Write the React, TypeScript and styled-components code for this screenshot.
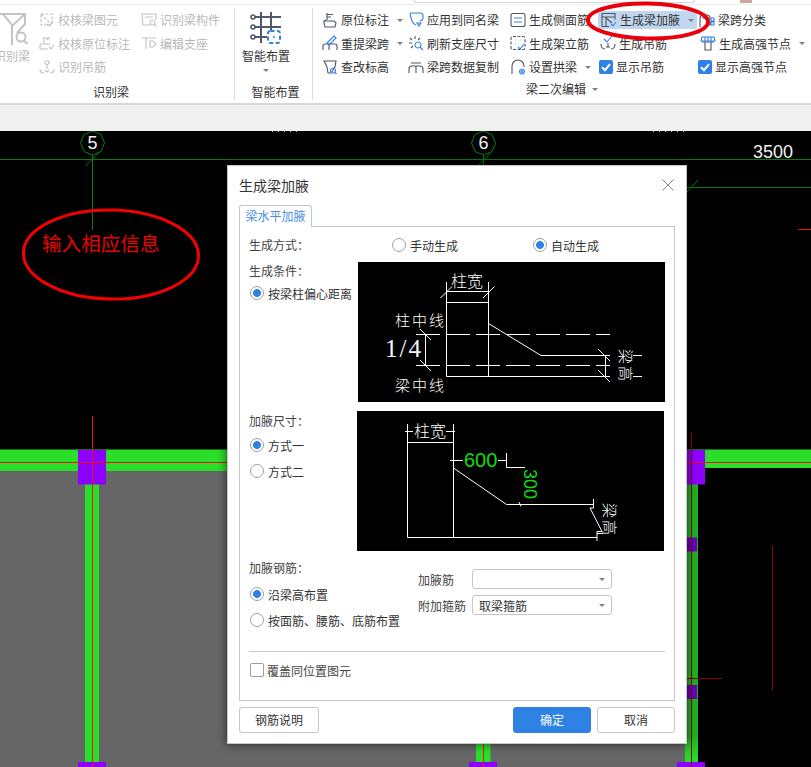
import React from "react";
import styled, { createGlobalStyle } from "styled-components";

const GlobalStyle = createGlobalStyle`
  html, body {
    margin: 0;
    padding: 0;
    background: #000;
  }
  body {
    font-family: "Noto Sans CJK SC", "Liberation Sans", sans-serif;
    font-size: 12px;
    color: #333;
  }
`;

type IconDef = { line?: string; dash?: string; accent?: string; fill?: string };

// small 16x16 ribbon icons, `accent` is the blue part
const icons: Record<string, IconDef> = {
  checkBeam: { dash: "M2 2h11v11H2z M2 2l9 9", accent: "M8 12l2 2 4-5" },
  checkMark: { line: "M5 2v6M5 3h5l-2 2M1 14v-3q0-2 2-2h8M1 14h8", accent: "M10 12l2 2 3-4" },
  findHanger: { line: "M1 10q0 4 4 4M15 10q0 4-4 4M8 5v5", accent: "M8 1.5a2 2 0 1 1-.01 0M6 11l2 2 2-2" },
  findPart: { line: "M1 2h14M1 2l1 11h7M15 2v6M4 5h8", accent: "M11.5 8a2.5 2.5 0 1 1-.01 0M13.5 12.5l2 2" },
  editSeat: { line: "M1 3h14M5 3v11M9 6h3l3 3-3 3H9z" },
  origin: { line: "M5 1v7M5 2.5h6M5 5h4M2 9h10l2 2-1 4H3l-1-4z M2 9l2-1" },
  relift: { line: "M1 15v-4q0-2 2-2h10q2 0 2 2v4M7 9v6", accent: "M5 8l7-7 2 2-7 7z" },
  elevation: { line: "M2 2h12l-1 6-4 6H6L5 8z", accent: "M11 9a2.5 2.5 0 1 1-.01 0M12.5 13l2 2" },
  samename: { accent: "M2 2q0-1 1-1h9q3 0 3 3v2q0 2-3 3M2 2l2 7q1 3 4 4M9 11h4l-2 3z" },
  refresh: { line: "M7 1v3M2 3l2 2M1 8h3M3 13l2-2M12 3l-2 2", accent: "M10 7a3 3 0 1 1-.01 0M12 12l3 3" },
  copySpan: { line: "M1 14v-4q0-3 3-3h8q3 0 3 3v4M8 7v7M3 4h10" },
  sideBar: { line: "M3 1.5h10q2 0 2 2v9q0 2-2 2H3q-2 0-2-2v-9q0-2 2-2z", accent: "M4 6h8M4 10h8" },
  frameBar: { dash: "M3 1.5h10q2 0 2 2v9q0 2-2 2H3q-2 0-2-2v-9q0-2 2-2z", accent: "M5 5h.5M10 5h.5M5 9h.5M8 12l2 2 4-5" },
  arch: { line: "M2 15V7a6 6 0 0 1 12 0v1", accent: "M12 10a2.5 2.5 0 1 1-.01 0M12 11.5a1 1 0 1 1-.01 0" },
  haunch: { line: "M1 1.5h13v6M1 1.5v13h7M1 5h13M5 5v9M5 6l6 5", accent: "M10 12l2 2 3-4" },
  hanger: { line: "M1 9q0 5 4 5M15 9q0 5-4 5M8 8v4M6 12h4", accent: "M4 4l3 3 5-6" },
  spanType: { line: "M1 15V6q0-3 3-3h4q3 0 3 3v2M3 6h7", accent: "M12 6h3v3h-3zM12 10h3v3h-3zM8 10h3v3H8z" },
  strong: { line: "M5 7v8h6V7M2 7h12", accent: "M2 2h12l1 4H1zM5 2v4M8 2v4M11 2v4" },
};

const Icon = ({ name, off }: { name: string; off?: boolean }) => {
  const def = icons[name];
  const dark = off ? "#c2c2c2" : "#4e5564";
  const blue = off ? "#c2c2c2" : "#2f80e7";
  return (
    <IconSvg viewBox="0 0 16 16">
      {def.line && <path d={def.line} stroke={dark} />}
      {def.dash && <path d={def.dash} stroke={dark} strokeDasharray="3 1.5" />}
      {def.accent && <path d={def.accent} stroke={blue} />}
    </IconSvg>
  );
};

const CheckBox = () => (
  <TickBox>
    <svg width="14" height="14" viewBox="0 0 14 14">
      <path d="M3 7.2l3 3 5-6" fill="none" stroke="#fff" strokeWidth="2" />
    </svg>
  </TickBox>
);

const App = () => {
  return (
    <Page>
      <GlobalStyle />
      <TopStrip>
        <SearchStub />
        <Avatar />
      </TopStrip>

      <Ribbon>
        <Group $w={235} $labelShift={12}>
          <GroupBody>
            <BigButton $off $w={36} $ml={-6} $mr={9}>
              <BigIconWrap $pl={6}>
                <svg width="28" height="33" viewBox="0 0 28 33" fill="none" stroke="#c4c4c4" strokeWidth="2">
                  <path d="M-2 2H25V12L17 21" />
                  <path d="M3 2L12 13V33M12 14L25 2" />
                  <circle cx="21" cy="25" r="4.5" />
                  <path d="M24.5 29l3 3" />
                </svg>
              </BigIconWrap>
              <span>识别梁</span>
            </BigButton>
            <Column $w={102}>
              <Item $off><Icon name="checkBeam" off />校核梁图元</Item>
              <Item $off><Icon name="checkMark" off />校核原位标注</Item>
              <Item $off><Icon name="findHanger" off />识别吊筋</Item>
            </Column>
            <Column $w={90}>
              <Item $off><Icon name="findPart" off />识别梁构件</Item>
              <Item $off><Icon name="editSeat" off />编辑支座</Item>
            </Column>
          </GroupBody>
          <GroupLabel>识别梁</GroupLabel>
        </Group>

        <Group $w={78} $labelShift={-4}>
          <GroupBody $pl={7}>
            <BigButton $w={48}>
              <BigIconWrap>
                <svg width="32" height="33" viewBox="0 0 32 33" fill="none">
                  <path d="M11 0V31M21 0V18M4 5H31M4 15H31M4 25H17" stroke="#50586a" strokeWidth="2" />
                  <circle cx="3" cy="5" r="2" stroke="#50586a" strokeWidth="1.6" />
                  <circle cx="3" cy="15" r="2" stroke="#50586a" strokeWidth="1.6" />
                  <circle cx="3" cy="25" r="2" stroke="#50586a" strokeWidth="1.6" />
                  <rect x="18" y="19" width="12" height="12" rx="2.5" stroke="#2f80e7" strokeWidth="2" strokeDasharray="4 2.5" />
                  <circle cx="24" cy="25" r="1" fill="#2f80e7" />
                </svg>
              </BigIconWrap>
              <span>智能布置</span>
              <Caret $ml={0} />
            </BigButton>
          </GroupBody>
          <GroupLabel>智能布置</GroupLabel>
        </Group>

        <Group $w={498} $last $labelUp>
          <GroupBody $pl={9}>
            <Column $w={86}>
              <Item><Icon name="origin" />原位标注<Caret /></Item>
              <Item><Icon name="relift" />重提梁跨<Caret /></Item>
              <Item><Icon name="elevation" />查改标高</Item>
            </Column>
            <Column $w={102}>
              <Item><Icon name="samename" />应用到同名梁</Item>
              <Item><Icon name="refresh" />刷新支座尺寸</Item>
              <Item><Icon name="copySpan" />梁跨数据复制</Item>
            </Column>
            <Column $w={88}>
              <Item><Icon name="sideBar" />生成侧面筋</Item>
              <Item><Icon name="frameBar" />生成架立筋</Item>
              <Item><Icon name="arch" />设置拱梁<Caret /></Item>
            </Column>
            <Column $w={99}>
              <Item $pl={3} $active><Icon name="haunch" />生成梁加腋<Caret /></Item>
              <Item $pl={2}><Icon name="hanger" />生成吊筋</Item>
              <Item $pl={1}><CheckBox />显示吊筋</Item>
            </Column>
            <Column $w={110}>
              <Item $pl={2}><Icon name="spanType" />梁跨分类</Item>
              <Item $pl={3}><Icon name="strong" />生成高强节点<Caret /></Item>
              <Item $pl={1}><CheckBox />显示高强节点</Item>
            </Column>
          </GroupBody>
          <GroupLabel>梁二次编辑<Caret $ml={6} /></GroupLabel>
        </Group>
      </Ribbon>

      <Gutter />

      <Canvas>
        <CadDrawing />
        <Dialog>
          <DialogHead>
            <DialogTitle>生成梁加腋</DialogTitle>
            <CloseMark viewBox="0 0 12 12">
              <path d="M.5.5l11 11M11.5.5l-11 11" stroke="#8a8a8a" fill="none" />
            </CloseMark>
          </DialogHead>
          <Tab>梁水平加腋</Tab>
          <Panel>
            <ModeRow>
              <FieldLabel $w={143}>生成方式：</FieldLabel>
              <RadioItem $w={141}><Radio />手动生成</RadioItem>
              <RadioItem><Radio $on />自动生成</RadioItem>
            </ModeRow>

            <SplitBlock>
              <LeftStack $mt={-1}>
                <FieldLabel>生成条件：</FieldLabel>
                <RadioItem $h={24}><Radio $on />按梁柱偏心距离</RadioItem>
              </LeftStack>
              <HaunchByOffset />
            </SplitBlock>

            <SplitBlock $mt={9} $ml={-1}>
              <LeftStack>
                <FieldLabel>加腋尺寸：</FieldLabel>
                <RadioItem $h={26} $mt={1}><Radio $on />方式一</RadioItem>
                <RadioItem $h={26}><Radio />方式二</RadioItem>
              </LeftStack>
              <HaunchBySize />
            </SplitBlock>

            <RebarBlock>
              <LeftStack>
                <FieldLabel>加腋钢筋：</FieldLabel>
                <RadioItem $h={26} $mt={3}><Radio $on />沿梁高布置</RadioItem>
                <RadioItem $h={26}><Radio />按面筋、腰筋、底筋布置</RadioItem>
              </LeftStack>
              <SelectStack>
                <SelectRow>
                  <SelectLabel>加腋筋</SelectLabel>
                  <FakeSelect><Caret $small /></FakeSelect>
                </SelectRow>
                <SelectRow>
                  <SelectLabel>附加箍筋</SelectLabel>
                  <FakeSelect>取梁箍筋<Caret $small /></FakeSelect>
                </SelectRow>
              </SelectStack>
            </RebarBlock>

            <Divider />
            <CoverRow>
              <EmptyBox />
              覆盖同位置图元
            </CoverRow>
          </Panel>
          <DialogFoot>
            <FootButton $w={80}>钢筋说明</FootButton>
            <FootRight>
              <FootButton $w={78} $primary>确定</FootButton>
              <FootButton $w={78}>取消</FootButton>
            </FootRight>
          </DialogFoot>
        </Dialog>
      </Canvas>

      <RibbonCircle viewBox="0 0 132 44">
        <ellipse cx="66" cy="21" rx="60" ry="17.5" fill="none" stroke="#e8000c" strokeWidth="4" transform="rotate(1 66 21)" />
      </RibbonCircle>
    </Page>
  );
};

// the drawing behind the dialog, coordinates are page pixels
const CadDrawing = () => (
  <CadSvg viewBox="0 131 811 636">
    <defs>
      <linearGradient id="colFade" x1="0" y1="0" x2="0" y2="1">
        <stop offset="0" stopColor="#22b022" />
        <stop offset="0.9" stopColor="#22b022" />
        <stop offset="1" stopColor="#2ade2a" />
      </linearGradient>
    </defs>
    <rect x="0" y="471" width="686" height="296" fill="#666" />
    <rect x="0" y="449.5" width="811" height="21.5" fill="#2ade2a" />
    <rect x="698" y="468" width="113" height="3" fill="#000" />

    <rect x="85" y="484" width="14" height="278" fill="#2ade2a" />
    <rect x="476" y="484" width="14.500" height="278" fill="#2ade2a" />
    <rect x="685" y="484" width="13" height="278" fill="url(#colFade)" />

    <rect x="78" y="450" width="28" height="34.500" fill="#8c00ff" />
    <rect x="78" y="762" width="28" height="5" fill="#8c00ff" />
    <rect x="469" y="762" width="28" height="5" fill="#8c00ff" />
    <rect x="677" y="762" width="28" height="5" fill="#8c00ff" />
    <rect x="680" y="450" width="25" height="34.500" fill="#8c00ff" />
    <rect x="685" y="537.500" width="12" height="14" fill="#6a00c0" />
    <rect x="685" y="685" width="12" height="14" fill="#6a00c0" />

    <g fill="none" strokeWidth="1">
      <path d="M0 462.500H811" stroke="#f01010" />
      <path d="M92.500 416V767M483.500 740V767" stroke="#f01010" />
      <path d="M691.500 433V767M687 678.500H722M772.500 546V690" stroke="#8b0000" />
      <path d="M798 229.500H811" stroke="#f01010" />

      <path d="M0 159.500H811M92.500 155V230M483.500 155V170M687 187.500H811" stroke="#0a7d0a" />
      <path d="M85.500 166L98.500 153M477.500 166L490.500 153M687 192L698 180" stroke="#0a7d0a" />
      <path d="M92.500 131L101 134.500L104.500 143L101 151.500L92.500 155L84 151.500L80.500 143L84 134.500Z" stroke="#0a7d0a" />
      <path d="M483.500 131L492 134.500L495.500 143L492 151.500L483.500 155L475 151.500L471.500 143L475 134.500Z" stroke="#0a7d0a" />
      <path d="M272 131.500H300M653 131.500H685" stroke="#bbb" strokeDasharray="1 5" />

      <ellipse cx="111" cy="254.500" rx="87.500" ry="44.500" stroke="#f40000" strokeWidth="3" transform="rotate(1 111 254.500)" />
    </g>

    <CadText x="92.500" y="149" fontSize="18" textAnchor="middle">5</CadText>
    <CadText x="483.500" y="149" fontSize="18" textAnchor="middle">6</CadText>
    <CadText x="753" y="158" fontSize="18">3500</CadText>
    <NoteText x="42" y="251">输入相应信息</NoteText>
  </CadSvg>
);

const HaunchByOffset = () => (
  <DiagramSvg viewBox="358 262 307 140">
    <g fill="none" stroke="#fff" strokeWidth="1">
      <path d="M446.500 282V376.500M488.500 282V376.500M446.500 291.500H488.500M446.500 302.500H488.500" />
      <path d="M440.500 298L452 286.500M483 298L494.500 286.500" />
      <path d="M488.500 323.500L541 355.500H610M446.500 376.500H610M605.500 355.500V376.500" />
      <path d="M598 349L610 361M598 370L610 382" />
      <path d="M416 334.500H610M416 365.500H610" strokeDasharray="24 6" />
      <path d="M425.500 334.500V365.500M420 329L431 340M420 360L431 371" />
      <path d="M633 355.500H642M633 376.500H642" />
    </g>
    <CadCjk x="451" y="287" fontSize="16">柱宽</CadCjk>
    <CadCjk x="395" y="326" fontSize="15" letterSpacing="2">柱中线</CadCjk>
    <CadCjk x="395" y="391" fontSize="15" letterSpacing="2">梁中线</CadCjk>
    <SerifText x="385" y="357" fontSize="25" letterSpacing="2">1/4</SerifText>
    <CadCjk fontSize="15" letterSpacing="2" transform="translate(619 349) rotate(90)" y="-1">梁高</CadCjk>
  </DiagramSvg>
);

const HaunchBySize = () => (
  <DiagramSvg viewBox="357 411 307 140">
    <g fill="none" stroke="#fff" strokeWidth="1">
      <path d="M407.500 424V537.500M453.500 424V537.500M407.500 442.500H453.500M407.500 537.500H597" />
      <path d="M405 431.500H413M446 431.500H455M450 460.500H463M498 460.500H507M506.500 453V467.500H525" />
      <path d="M453.500 468L506.500 504.500H593.500V499M593.500 504.500V508H590L602 531.500H597V541M597 533.500H603" />
      <path d="M519 502L521 506.500" />
    </g>
    <CadCjk x="414" y="437" fontSize="16">柱宽</CadCjk>
    <GreenText x="464" y="467" fontSize="20">600</GreenText>
    <GreenText fontSize="18" transform="translate(524 469) rotate(90)">300</GreenText>
    <CadCjk fontSize="15" letterSpacing="2" transform="translate(604 503) rotate(90)">梁高</CadCjk>
  </DiagramSvg>
);

const Page = styled.div`
  position: relative;
  width: 811px;
  height: 767px;
  overflow: hidden;
  display: flex;
  flex-direction: column;
  background: #fff;
`;

const TopStrip = styled.div`
  height: 5px;
  display: flex;
  background: #fff;
  border-bottom: 1px solid #eeeeee;
  box-sizing: border-box;
`;

const SearchStub = styled.div`
  width: 282px;
  height: 3px;
  margin-left: 413px;
  border: 1px solid #d5d5d5;
  border-top: 0;
  border-radius: 0 0 4px 4px;
  box-sizing: border-box;
`;

const Avatar = styled.div`
  width: 12px;
  height: 3px;
  margin-left: 45px;
  background: #c9a79a;
`;

const Ribbon = styled.div`
  height: 100px;
  box-sizing: border-box;
  display: flex;
  align-items: flex-start;
  padding-top: 3px;
  background: #fff;
  border-bottom: 2px solid #d9d9d9;
`;

const Group = styled.section<{ $w: number; $last?: boolean; $labelShift?: number; $labelUp?: boolean }>`
  width: ${(p) => p.$w}px;
  height: 92px;
  flex: none;
  box-sizing: border-box;
  border-right: ${(p) => (p.$last ? "0" : "1px solid #dcdcdc")};
  display: flex;
  flex-direction: column;

  & > div:last-child {
    transform: translate(${(p) => -(p.$labelShift ?? 0) / 2}px, ${(p) => (p.$labelUp ? -3 : 0)}px);
  }
`;

const GroupBody = styled.div<{ $pl?: number }>`
  height: 76px;
  display: flex;
  padding-left: ${(p) => p.$pl ?? 0}px;
`;

const GroupLabel = styled.div`
  height: 16px;
  line-height: 16px;
  display: flex;
  align-items: center;
  justify-content: center;
  color: #333;
`;

const Column = styled.div<{ $w: number }>`
  width: ${(p) => p.$w}px;
  flex: none;
  display: grid;
  grid-auto-rows: 23.5px;
  align-items: center;
  align-content: start;
`;

const Item = styled.div<{ $off?: boolean; $pl?: number; $active?: boolean }>`
  height: 18px;
  display: flex;
  align-items: center;
  gap: 3px;
  white-space: nowrap;
  padding-left: ${(p) => p.$pl ?? 0}px;
  color: ${(p) => (p.$off ? "#b9b9b9" : "#333")};
  background: ${(p) => (p.$active ? "#c0d7ef" : "transparent")};
  border-radius: 2px;
`;

const IconSvg = styled.svg`
  width: 16px;
  height: 16px;
  flex: none;
  fill: none;
  stroke-width: 1.1;
`;

const TickBox = styled.span`
  width: 14px;
  height: 14px;
  flex: none;
  display: block;
  background: #2f80e7;
  border-radius: 2px;
`;

const BigButton = styled.div<{ $off?: boolean; $w: number; $ml?: number; $mr?: number }>`
  width: ${(p) => p.$w}px;
  margin-left: ${(p) => p.$ml ?? 0}px;
  margin-right: ${(p) => p.$mr ?? 0}px;
  flex: none;
  display: flex;
  flex-direction: column;
  align-items: center;
  padding-top: 4px;
  line-height: 16px;
  white-space: nowrap;
  color: ${(p) => (p.$off ? "#b9b9b9" : "#333")};

  & > span:last-child {
    flex: none;
  }
`;

const BigIconWrap = styled.div<{ $pl?: number }>`
  height: 33px;
  margin-bottom: 3px;
  align-self: flex-start;
  padding-left: ${(p) => p.$pl ?? 8}px;
  line-height: 0;
`;

const Caret = styled.span<{ $ml?: number; $small?: boolean }>`
  display: block;
  flex: none;
  width: 0;
  height: 0;
  margin-left: ${(p) => (p.$small ? "auto" : `${p.$ml ?? 5}px`)};
  margin-top: ${(p) => (p.$ml === 0 ? "5px" : "1px")};
  border-left: 3px solid transparent;
  border-right: 3px solid transparent;
  border-top: 3px solid #808080;
`;

const Gutter = styled.div`
  height: 26px;
  background: #f0f0f0;
`;

const Canvas = styled.div`
  position: relative;
  flex: 1;
  background: #000;
`;

const CadSvg = styled.svg`
  display: block;
  width: 811px;
  height: 636px;
`;

const CadText = styled.text`
  fill: #f2f2f2;
  font-family: "Liberation Sans", sans-serif;
`;

const NoteText = styled.text`
  fill: #ee0000;
  font-family: "Noto Sans CJK SC", sans-serif;
  font-size: 19.6px;
`;

const RibbonCircle = styled.svg`
  position: absolute;
  left: 582px;
  top: 0;
  width: 132px;
  height: 44px;
`;

const Dialog = styled.div`
  position: absolute;
  left: 227px;
  top: 34px;
  width: 460px;
  height: 579px;
  box-sizing: border-box;
  padding: 0 11px;
  background: #fff;
  border: 1px solid #c6c6c6;
  box-shadow: 0 0 9px rgba(0, 0, 0, 0.65);
  display: flex;
  flex-direction: column;
`;

const DialogHead = styled.div`
  height: 39px;
  display: flex;
  align-items: center;
  justify-content: space-between;
  flex: none;
`;

const DialogTitle = styled.div`
  font-size: 14px;
  color: #333;
  margin-top: -2px;
`;

const CloseMark = styled.svg`
  width: 12px;
  height: 12px;
  margin-right: 1px;
  margin-top: -2px;
`;

const Tab = styled.div`
  width: 73px;
  height: 22px;
  box-sizing: border-box;
  margin-bottom: -1px;
  position: relative;
  z-index: 1;
  text-align: center;
  line-height: 20px;
  color: #4a90e2;
  background: #fff;
  border: 1px solid #c6c6c6;
  border-bottom: 0;
  border-radius: 3px 3px 0 0;
  flex: none;
`;

const Panel = styled.div`
  height: 475px;
  box-sizing: border-box;
  padding: 8px 9px 0;
  border: 1px solid #c6c6c6;
  flex: none;
`;

const ModeRow = styled.div`
  display: flex;
  align-items: center;
  height: 20px;
`;

const FieldLabel = styled.div<{ $w?: number }>`
  height: 20px;
  line-height: 20px;
  color: #444;
  flex: none;
  width: ${(p) => (p.$w ? `${p.$w}px` : "auto")};
`;

const RadioItem = styled.div<{ $w?: number; $h?: number; $mt?: number }>`
  display: flex;
  align-items: center;
  gap: 4px;
  white-space: nowrap;
  color: #333;
  height: ${(p) => p.$h ?? 20}px;
  margin-top: ${(p) => p.$mt ?? 0}px;
  width: ${(p) => (p.$w ? `${p.$w}px` : "auto")};
`;

const Radio = styled.span<{ $on?: boolean }>`
  width: 14px;
  height: 14px;
  flex: none;
  box-sizing: border-box;
  margin-left: 0;
  border-radius: 50%;
  border: 1px solid #9e9e9e;
  background: ${(p) => (p.$on ? "radial-gradient(circle, #2f80e7 0 3.6px, #fff 4.2px)" : "#fff")};
`;

const SplitBlock = styled.div<{ $mt?: number; $ml?: number }>`
  display: grid;
  grid-template-columns: 109px 1fr;
  margin-top: ${(p) => p.$mt ?? 7}px;
  margin-left: 0;

  & > svg {
    margin-left: ${(p) => p.$ml ?? 0}px;
  }
`;

const LeftStack = styled.div<{ $mt?: number }>`
  display: flex;
  flex-direction: column;
  margin-top: ${(p) => p.$mt ?? 0}px;
  ${RadioItem} {
    padding-left: 1px;
  }
`;

const DiagramSvg = styled.svg`
  display: block;
  width: 307px;
  height: 140px;
  background: #000;
  font-family: "Noto Sans CJK SC", sans-serif;
`;

const CadCjk = styled.text`
  fill: #fff;
  font-weight: 300;
  font-family: "Noto Sans CJK SC", sans-serif;
`;

const SerifText = styled.text`
  fill: #f4f8ff;
  font-family: "Liberation Serif", serif;
`;

const GreenText = styled.text`
  fill: #0fdc0f;
  font-family: "Liberation Sans", sans-serif;
`;

const RebarBlock = styled.div`
  height: 83px;
  margin-top: 7px;
  display: grid;
  grid-template-columns: 169px 1fr;
`;

const SelectStack = styled.div`
  display: flex;
  flex-direction: column;
  gap: 6px;
  padding-top: 11px;
`;

const SelectRow = styled.div`
  display: flex;
  align-items: center;
  height: 20px;
`;

const SelectLabel = styled.div`
  width: 54px;
  flex: none;
  color: #444;
  white-space: nowrap;
`;

const FakeSelect = styled.div`
  width: 140px;
  height: 20px;
  box-sizing: border-box;
  display: flex;
  align-items: center;
  padding: 0 6px;
  color: #333;
  border: 1px solid #c6c6c6;
  border-radius: 3px;
`;

const Divider = styled.div`
  height: 1px;
  margin-top: 10px;
  background: #c9c9c9;
`;

const CoverRow = styled.div`
  display: flex;
  align-items: center;
  gap: 3px;
  height: 14px;
  margin-top: 11px;
  padding-left: 1px;
  color: #444;
`;

const EmptyBox = styled.span`
  width: 14px;
  height: 14px;
  box-sizing: border-box;
  display: block;
  border: 1px solid #9e9e9e;
  border-radius: 2px;
`;

const DialogFoot = styled.div`
  display: flex;
  justify-content: space-between;
  margin-top: 6px;
`;

const FootRight = styled.div`
  display: flex;
  gap: 6px;
`;

const FootButton = styled.div<{ $w: number; $primary?: boolean }>`
  width: ${(p) => p.$w}px;
  height: 26px;
  box-sizing: border-box;
  line-height: 24px;
  text-align: center;
  border-radius: 3px;
  color: ${(p) => (p.$primary ? "#fff" : "#333")};
  background: ${(p) => (p.$primary ? "#2e82e4" : "#fff")};
  border: 1px solid ${(p) => (p.$primary ? "#2e82e4" : "#c6c6c6")};
`;

export default App;
